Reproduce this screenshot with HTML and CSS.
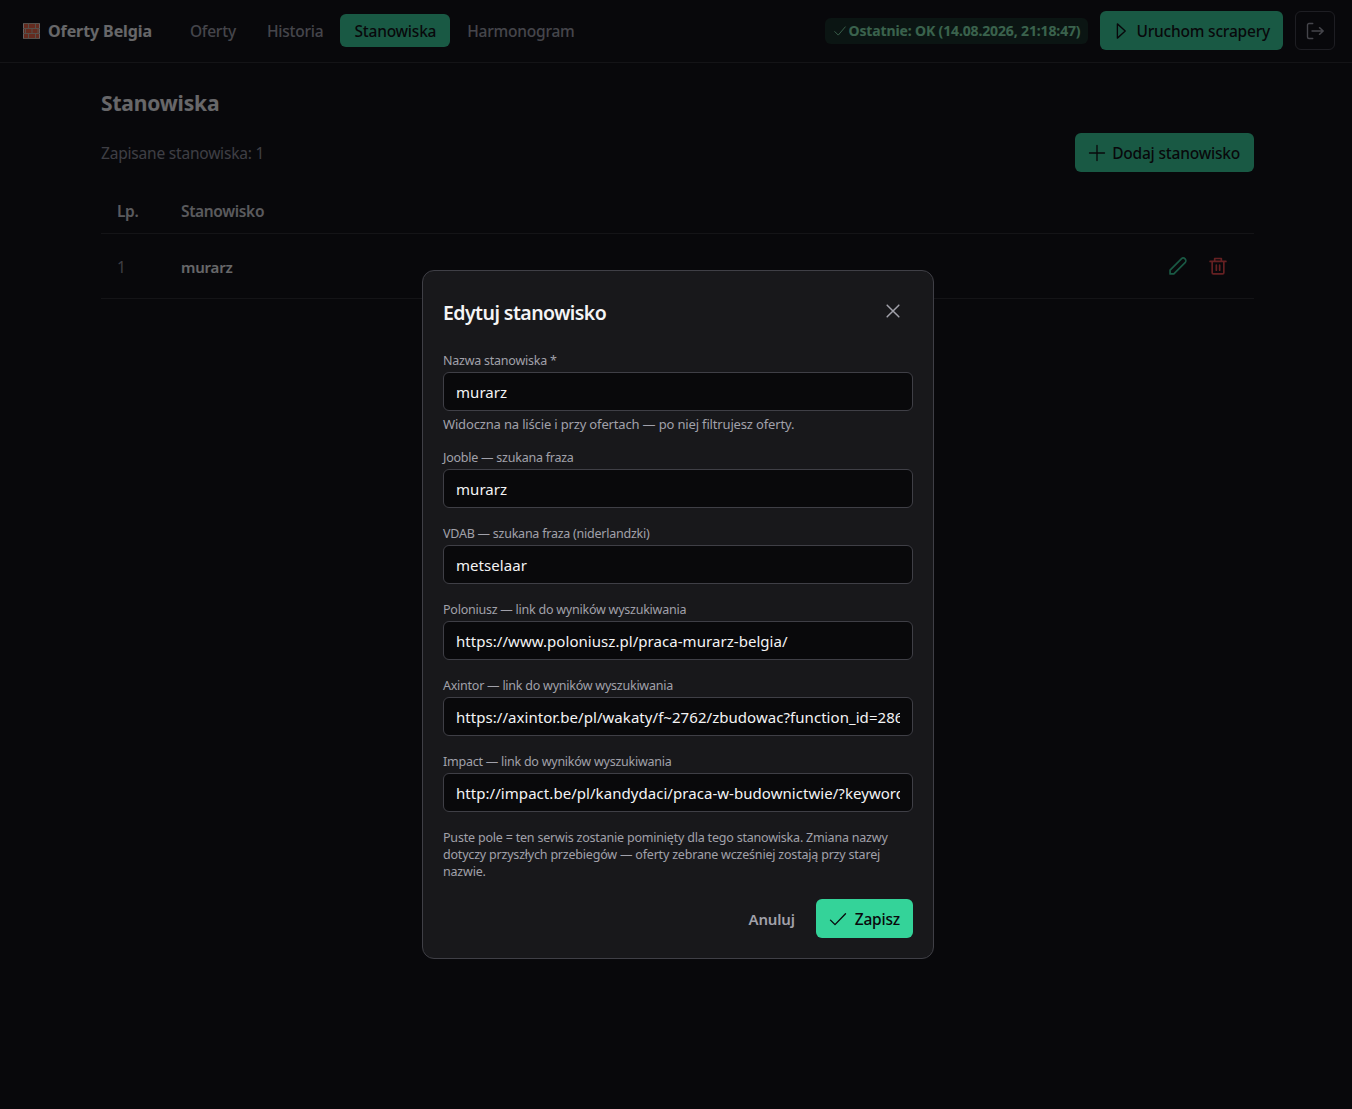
FILE: index.html
```html
<!DOCTYPE html>
<html lang="pl">
<head>
    <meta charset="UTF-8">
    <title>Oferty Belgia</title>
    <link rel="stylesheet" href="styles.css">
</head>
<body>
    <header class="topbar">
        <div class="brand">
            <svg class="brick" viewBox="0 0 17 16">
                <rect width="17" height="16" fill="#f0603c"/>
                <path d="M0 .5h17M0 5.500h17M0 10.500h17M0 15.500h17M5.500 .5v5M12.500 .5v5M2.500 5.500v5M9 5.500v5M15 5.500v5M5.500 10.500v5M12.500 10.500v5"/>
            </svg>
            <span>Oferty Belgia</span>
        </div>
        <nav class="nav">
            <a class="nav-link">Oferty</a>
            <a class="nav-link">Historia</a>
            <a class="nav-link active">Stanowiska</a>
            <a class="nav-link">Harmonogram</a>
        </nav>
        <div class="topbar-right">
            <div class="status">
                <svg class="icon-sm" viewBox="0 0 24 24"><path d="M3 13l6 6L21 5"/></svg>
                <span>Ostatnie: OK (14.08.2026, 21:18:47)</span>
            </div>
            <button class="button run">
                <svg class="icon" viewBox="0 0 24 24"><path d="M4.500 2.500L15 12 4.500 21.500z"/></svg>
                Uruchom scrapery
            </button>
            <button class="logout">
                <svg class="icon" viewBox="0 0 24 24"><path d="M9 2H4a2 2 0 0 0-2 2v16a2 2 0 0 0 2 2h5M8 12h15M18 7.500l5 4.500-5 4.500"/></svg>
            </button>
        </div>
    </header>

    <main class="content">
        <h1 class="page-title">Stanowiska</h1>
        <div class="toolbar">
            <span class="count">Zapisane stanowiska: 1</span>
            <button class="button add">
                <svg class="icon" viewBox="0 0 24 24"><path d="M12 2v20M2 12h20"/></svg>
                Dodaj stanowisko
            </button>
        </div>
        <div class="table">
            <div class="table-row table-head">
                <div class="col-lp">Lp.</div>
                <div>Stanowisko</div>
            </div>
            <div class="table-row">
                <div class="col-lp num">1</div>
                <div class="name">murarz</div>
                <div class="actions">
                    <svg class="action edit" viewBox="0 0 24 24"><path d="M2.500 21.500v-4.500L16 3.500a3 3 0 0 1 4.500 4.500L7 21.500z"/></svg>
                    <svg class="action trash" viewBox="0 0 24 24"><path d="M2.500 6.500h19M8 6.500V3h8v3.500M5 6.500V20a1.500 1.500 0 0 0 1.500 1.500h11A1.500 1.500 0 0 0 19 20V6.500M10 11v6M14 11v6"/></svg>
                </div>
            </div>
        </div>
    </main>

    <div class="overlay">
        <form class="modal">
            <div class="modal-head">
                <h2>Edytuj stanowisko</h2>
                <svg class="close" viewBox="0 0 24 24"><path d="M5 5l14 14M19 5L5 19"/></svg>
            </div>

            <div class="field">
                <label>Nazwa stanowiska *</label>
                <input type="text" value="murarz">
                <p class="hint">Widoczna na liście i przy ofertach — po niej filtrujesz oferty.</p>
            </div>
            <div class="field">
                <label>Jooble — szukana fraza</label>
                <input type="text" value="murarz">
            </div>
            <div class="field">
                <label>VDAB — szukana fraza (niderlandzki)</label>
                <input type="text" value="metselaar">
            </div>
            <div class="field">
                <label>Poloniusz — link do wyników wyszukiwania</label>
                <input type="text" value="https://www.poloniusz.pl/praca-murarz-belgia/">
            </div>
            <div class="field">
                <label>Axintor — link do wyników wyszukiwania</label>
                <input type="text" value="https://axintor.be/pl/wakaty/f~2762/zbudowac?function_id=2862">
            </div>
            <div class="field">
                <label>Impact — link do wyników wyszukiwania</label>
                <input type="text" value="http://impact.be/pl/kandydaci/praca-w-budownictwie/?keyword=murarz">
            </div>

            <p class="note">Puste pole = ten serwis zostanie pominięty dla tego stanowiska. Zmiana nazwy dotyczy przyszłych przebiegów — oferty zebrane wcześniej zostają przy starej nazwie.</p>

            <div class="modal-actions">
                <button type="button" class="cancel">Anuluj</button>
                <button type="button" class="button save">
                    <svg class="icon" viewBox="0 0 24 24"><path d="M2 13.500l6 6L22 5"/></svg>
                    Zapisz
                </button>
            </div>
        </form>
    </div>
</body>
</html>
```

FILE: styles.css
```css
* {
    box-sizing: border-box;
}
body {
    margin: 0;
    min-height: 1109px;
    background-color: #09090b;
    color: #f4f4f5;
    font-family: "Noto Sans", sans-serif;
    font-size: 15.5px;
}
svg {
    fill: none;
    stroke: currentColor;
    stroke-width: 1.8;
    stroke-linecap: round;
    stroke-linejoin: round;
    flex-shrink: 0;
}
.icon {
    width: 18px;
    height: 18px;
}
.icon-sm {
    width: 14px;
    height: 14px;
    stroke-width: 1.6;
}

/* top bar */
.topbar {
    display: flex;
    align-items: center;
    height: 63px;
    padding: 0 17px 1px 23px;
    border-bottom: 1px solid #27272a;
}
.brand {
    display: flex;
    align-items: center;
    gap: 8px;
    font-size: 16px;
    font-weight: 700;
    letter-spacing: -0.1px;
    margin-right: 24px;
}
.brick {
    width: 17px;
    height: 16px;
    stroke-linecap: butt;
}
.brick path {
    stroke: #c9b8a8;
    stroke-width: 1;
}
.nav {
    display: flex;
    gap: 3px;
}
.nav-link {
    padding: 7px 14px 5px;
    height: 33px;
    border-radius: 6px;
    color: #a1a1aa;
    font-weight: 500;
    letter-spacing: -0.22px;
    line-height: 21px;
}
.nav-link.active {
    background-color: #34d399;
    color: #09090b;
}
.topbar-right {
    display: flex;
    align-items: center;
    margin-left: auto;
    gap: 12px;
}
.status {
    display: flex;
    align-items: center;
    gap: 2px;
    height: 26px;
    padding: 0 8px;
    border-radius: 6px;
    background-color: #102a1e;
    color: #86e8b0;
    font-size: 14px;
    font-weight: 700;
    letter-spacing: -0.14px;
}
.button {
    display: inline-flex;
    align-items: center;
    gap: 8px;
    height: 39px;
    padding: 0 13px;
    border: none;
    border-radius: 6px;
    background-color: #34d399;
    color: #09090b;
    font-family: inherit;
    font-size: 15.5px;
    font-weight: 500;
    letter-spacing: -0.2px;
}
.run {
    padding: 0 13px 0 14px;
    gap: 4px;
}
.add {
    padding: 0 14px 0 13px;
    gap: 6px;
}
.logout {
    display: flex;
    align-items: center;
    justify-content: center;
    width: 40px;
    height: 39px;
    padding: 0;
    border: 1px solid #3f3f46;
    border-radius: 6px;
    background: none;
    color: #a1a1aa;
}

/* page */
.content {
    width: 1153px;
    margin-left: 101px;
}
.page-title {
    margin: 26px 0 16px;
    font-size: 21px;
    line-height: 28px;
    font-weight: 700;
    letter-spacing: -0.17px;
}
.toolbar {
    display: flex;
    align-items: center;
    justify-content: space-between;
    height: 39px;
    margin-bottom: 20px;
}
.count {
    color: #90909a;
    letter-spacing: -0.2px;
}
.table-row {
    display: flex;
    align-items: center;
    height: 65px;
    padding: 0 16px;
    border-bottom: 1px solid #27272a;
}
.table-head {
    height: 42px;
    padding-bottom: 4px;
    color: #d4d4d8;
    font-weight: 600;
    letter-spacing: -0.35px;
}
.col-lp {
    width: 64px;
}
.num {
    padding-top: 1px;
    font-size: 15.5px;
    color: #90909a;
}
.name {
    padding-top: 1px;
    font-size: 15px;
    font-weight: 600;
    letter-spacing: -0.2px;
}
.actions {
    display: flex;
    gap: 20px;
    margin-left: auto;
    margin-right: 10px;
}
.action {
    width: 20px;
    height: 20px;
    stroke-width: 2;
}
.edit {
    color: #34d399;
}
.trash {
    color: #ef4444;
}

/* modal */
.overlay {
    position: fixed;
    inset: 0;
    display: flex;
    justify-content: center;
    align-items: flex-start;
    padding: 270px 0 0 4px;
    background-color: rgba(9, 9, 11, 0.6);
}
.modal {
    width: 512px;
    padding: 20px;
    border: 1px solid #3f3f46;
    border-radius: 12px;
    background-color: #18181b;
}
.modal-head {
    display: flex;
    align-items: center;
    justify-content: space-between;
    height: 44px;
    margin-bottom: 17px;
}
.modal-head h2 {
    margin: 0 0 2px;
    font-size: 19.5px;
    font-weight: 600;
    letter-spacing: -0.55px;
}
.close {
    width: 20px;
    height: 20px;
    margin-right: 10px;
    margin-top: -4px;
    color: #a1a1aa;
}
.field {
    margin-bottom: 17px;
}
.field label {
    display: block;
    height: 20px;
    font-size: 12.500px;
    line-height: 17px;
    letter-spacing: -0.24px;
    color: #a1a1aa;
}
.field input {
    display: block;
    width: 100%;
    height: 39px;
    padding: 0 12px;
    border: 1px solid #3f3f46;
    border-radius: 6px;
    background-color: #09090b;
    color: #f4f4f5;
    font-family: inherit;
    font-size: 15px;
    letter-spacing: 0.05px;
}
.hint {
    margin: 5px 0 -1px;
    height: 17px;
    font-size: 13px;
    line-height: 17px;
    letter-spacing: -0.16px;
    color: #a1a1aa;
}
.note {
    margin: 0;
    font-size: 12.500px;
    line-height: 17px;
    letter-spacing: -0.2px;
    color: #a1a1aa;
}
.modal-actions {
    display: flex;
    align-items: center;
    justify-content: flex-end;
    gap: 21px;
    margin-top: 19px;
}
.cancel {
    border: none;
    background: none;
    padding: 0;
    color: #a1a1aa;
    font-family: inherit;
    font-size: 15px;
    font-weight: 600;
    letter-spacing: -0.2px;
}
```
